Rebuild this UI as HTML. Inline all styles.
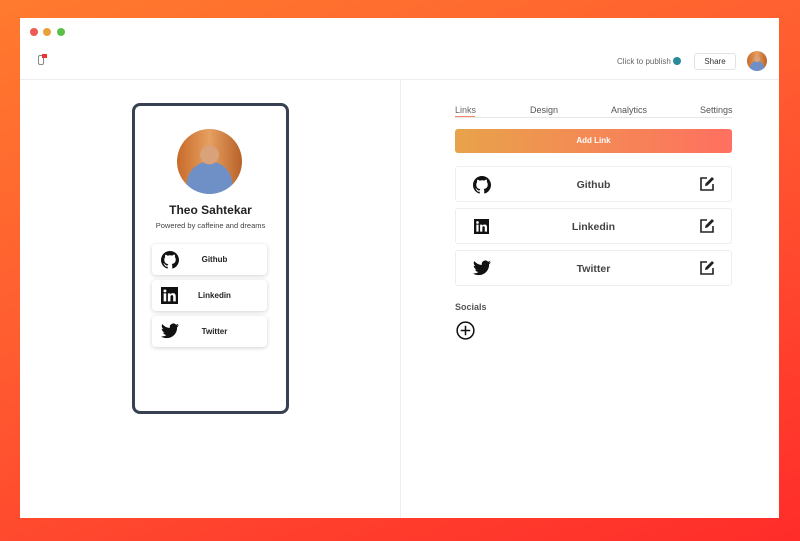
<!DOCTYPE html>
<html><head><meta charset="utf-8"><style>
*{margin:0;padding:0;box-sizing:border-box}
body{width:800px;height:541px;overflow:hidden;background:linear-gradient(160deg,#ff7a2e 0%,#ff5a30 45%,#ff2c2a 100%);font-family:"Liberation Sans",sans-serif;position:relative}
.win{position:absolute;left:20px;top:18px;width:759px;height:500px;background:#fff}
.dot{position:absolute;top:10px;width:8px;height:8px;border-radius:50%}
.hdr{position:absolute;left:0;right:0;top:61px;height:1px;background:#eceef2}
.vdiv{position:absolute;left:380px;top:62px;bottom:0;width:1px;background:#eceef2}
.phone{position:absolute;left:112px;top:85px;width:157px;height:311px;border:3px solid #374151;border-radius:8px;background:#fff}
.av{position:absolute;border-radius:50%;background:radial-gradient(circle at 50% 40%,#d9a27a 0 18%,transparent 19%),radial-gradient(circle at 50% 85%,#6f8fc7 0 35%,transparent 36%),linear-gradient(90deg,#c86a2a,#e6a060 50%,#b8612a)}
.card{position:absolute;left:17px;width:115px;height:31px;background:#fff;border-radius:4px;box-shadow:0 1px 4px rgba(0,0,0,.18);font-size:8px;font-weight:bold;color:#222}
.card span{position:absolute;left:10px;right:0;text-align:center;top:11px}
.card svg{position:absolute;left:9px;top:7px}
.tab{position:absolute;top:87px;font-size:9px;color:#555}
.row{position:absolute;left:435px;width:277px;height:36px;border:1px solid #eceef0;border-radius:3px;font-size:10.5px;font-weight:bold;color:#444}
.row span{position:absolute;left:0;right:0;text-align:center;top:12px}
.row .ic{position:absolute;left:17px;top:9px}
.row .ed{position:absolute;left:243px;top:9px}
</style></head><body>
<div class="win">
<div class="dot" style="left:10px;background:#ee5a52"></div>
<div class="dot" style="left:23px;background:#e8a23c"></div>
<div class="dot" style="left:37px;background:#5bbf4a"></div>
<div style="position:absolute;left:18px;top:37px;width:6px;height:10px;border:1.5px solid #888;border-radius:2px"></div>
<div style="position:absolute;left:22px;top:36px;width:5px;height:4px;background:#e33"></div>
<div style="position:absolute;left:597px;top:39px;font-size:8px;color:#666">Click to publish</div>
<div style="position:absolute;left:653px;top:39px;width:8px;height:8px;border-radius:50%;background:#2a8a9a"></div>
<div style="position:absolute;left:674px;top:35px;width:42px;height:17px;border:1px solid #e3e3e3;border-radius:3px;font-size:8px;color:#333;text-align:center;line-height:15px">Share</div>
<div class="av" style="left:727px;top:33px;width:20px;height:20px"></div>
<div class="hdr"></div><div class="vdiv"></div>

<div class="phone">
<div class="av" style="left:42px;top:23px;width:65px;height:65px"></div>
<div style="position:absolute;left:0;right:0;top:97px;text-align:center;font-size:12px;font-weight:bold;color:#222">Theo Sahtekar</div>
<div style="position:absolute;left:0;right:0;top:115px;text-align:center;font-size:7.5px;color:#444">Powered by caffeine and dreams</div>
<div class="card" style="top:138px"><svg width="18" height="18" viewBox="0 0 16 16"><path fill="#111" d="M8 0C3.58 0 0 3.58 0 8c0 3.54 2.290 6.53 5.47 7.59.4.07.55-.17.55-.38v-1.33c-2.23.48-2.7-1.07-2.7-1.07-.36-.92-.89-1.17-.89-1.17-.73-.5.06-.49.06-.49.8.06 1.23.83 1.23.83.71 1.23 1.87.87 2.33.67.07-.52.28-.87.51-1.07-1.78-.2-3.64-.89-3.64-3.95 0-.87.31-1.59.82-2.15-.08-.2-.36-1.02.08-2.12 0 0 .67-.21 2.2.82A7.6 7.6 0 0 1 8 3.8c.68 0 1.36.09 2 .27 1.53-1.04 2.2-.82 2.2-.82.44 1.1.16 1.92.08 2.12.51.56.82 1.27.82 2.15 0 3.07-1.87 3.75-3.65 3.950.29.25.54.73.54 1.48v2.2c0 .21.15.46.55.38A8 8 0 0 0 16 8c0-4.42-3.58-8-8-8z"/></svg><span>Github</span></div>
<div class="card" style="top:174px"><svg width="17" height="17" viewBox="0 0 16 16"><rect width="16" height="16" fill="#111"/><rect x="2.5" y="6" width="2.4" height="7.5" fill="#fff"/><circle cx="3.7" cy="3.7" r="1.4" fill="#fff"/><path fill="#fff" d="M6.5 6h2.3v1.1c.4-.7 1.2-1.3 2.4-1.3 2.3 0 2.7 1.5 2.7 3.4v4.3h-2.4V9.7c0-.9 0-2-1.2-2s-1.4.9-1.4 1.9v3.9H6.5z"/></svg><span>Linkedin</span></div>
<div class="card" style="top:210px"><svg width="18" height="16" viewBox="0 0 24 20"><path fill="#111" d="M24 2.4a9.8 9.8 0 0 1-2.8.8A4.9 4.9 0 0 0 23.3.4a9.9 9.9 0 0 1-3.1 1.2A4.9 4.9 0 0 0 11.8 6 14 14 0 0 1 1.7.9a4.9 4.9 0 0 0 1.5 6.6A4.9 4.9 0 0 1 1 6.9a4.9 4.9 0 0 0 3.9 4.9 4.9 4.9 0 0 1-2.2.1 4.9 4.9 0 0 0 4.6 3.4A9.9 9.9 0 0 1 0 17.3 14 14 0 0 0 7.5 19.5c9.1 0 14-7.5 14-14v-.6A10 10 0 0 0 24 2.4z"/></svg><span>Twitter</span></div>
</div>

<div class="tab" style="left:435px;color:#666">Links</div>
<div style="position:absolute;left:435px;top:98px;width:20px;height:2px;background:#f08a6a"></div>
<div class="tab" style="left:510px">Design</div>
<div class="tab" style="left:591px">Analytics</div>
<div class="tab" style="left:680px">Settings</div>
<div style="position:absolute;left:435px;top:99px;width:277px;height:1px;background:#e6e6e6"></div>
<div style="position:absolute;left:435px;top:111px;width:277px;height:24px;border-radius:3px;background:linear-gradient(90deg,#e8a34a,#ff7060);color:#fff;font-size:8px;font-weight:bold;text-align:center;line-height:24px">Add Link</div>

<div class="row" style="top:148px"><svg class="ic" width="18" height="18" viewBox="0 0 16 16"><path fill="#111" d="M8 0C3.58 0 0 3.58 0 8c0 3.54 2.29 6.53 5.47 7.59.4.07.55-.17.55-.38v-1.33c-2.23.48-2.7-1.07-2.7-1.07-.36-.92-.89-1.17-.89-1.17-.73-.5.06-.49.06-.49.8.06 1.23.83 1.23.83.71 1.23 1.87.87 2.33.67.07-.52.28-.87.51-1.07-1.78-.2-3.64-.89-3.64-3.95 0-.87.31-1.59.82-2.15-.08-.2-.36-1.02.08-2.12 0 0 .67-.21 2.2.82A7.6 7.6 0 0 1 8 3.8c.68 0 1.36.09 2 .27 1.53-1.04 2.2-.82 2.2-.82.44 1.1.16 1.92.08 2.12.51.56.82 1.27.82 2.15 0 3.07-1.87 3.75-3.65 3.95.29.25.54.73.54 1.48v2.2c0 .21.15.46.55.38A8 8 0 0 0 16 8c0-4.42-3.58-8-8-8z"/></svg><span>Github</span><svg class="ed" width="16" height="16" viewBox="0 0 16 16"><path d="M8 2H2v12h12V8" fill="none" stroke="#222" stroke-width="1.6"/><path d="M6 10l.5-2.5L13 1l2 2-6.5 6.5z" fill="#222"/></svg></div>
<div class="row" style="top:190px"><svg class="ic" style="left:18px;top:10px" width="15" height="15" viewBox="0 0 16 16"><rect width="16" height="16" fill="#111"/><rect x="2.5" y="6" width="2.4" height="7.5" fill="#fff"/><circle cx="3.7" cy="3.7" r="1.4" fill="#fff"/><path fill="#fff" d="M6.5 6h2.3v1.1c.4-.7 1.2-1.3 2.4-1.3 2.3 0 2.7 1.5 2.7 3.4v4.3h-2.4V9.7c0-.9 0-2-1.2-2s-1.4.9-1.4 1.9v3.9H6.5z"/></svg><span>Linkedin</span><svg class="ed" width="16" height="16" viewBox="0 0 16 16"><path d="M8 2H2v12h12V8" fill="none" stroke="#222" stroke-width="1.6"/><path d="M6 10l.5-2.5L13 1l2 2-6.5 6.5z" fill="#222"/></svg></div>
<div class="row" style="top:232px"><svg class="ic" width="18" height="16" viewBox="0 0 24 20"><path fill="#111" d="M24 2.4a9.8 9.8 0 0 1-2.8.8A4.9 4.9 0 0 0 23.3.4a9.9 9.9 0 0 1-3.1 1.2A4.9 4.9 0 0 0 11.8 6 14 14 0 0 1 1.7.9a4.9 4.9 0 0 0 1.5 6.6A4.9 4.9 0 0 1 1 6.9a4.9 4.9 0 0 0 3.9 4.9 4.9 4.9 0 0 1-2.2.1 4.9 4.9 0 0 0 4.6 3.4A9.9 9.9 0 0 1 0 17.3 14 14 0 0 0 7.5 19.5c9.1 0 14-7.5 14-14v-.6A10 10 0 0 0 24 2.4z"/></svg><span>Twitter</span><svg class="ed" width="16" height="16" viewBox="0 0 16 16"><path d="M8 2H2v12h12V8" fill="none" stroke="#222" stroke-width="1.6"/><path d="M6 10l.5-2.5L13 1l2 2-6.5 6.5z" fill="#222"/></svg></div>

<div style="position:absolute;left:435px;top:284px;font-size:9px;font-weight:bold;color:#555">Socials</div>
<svg style="position:absolute;left:436px;top:303px" width="19" height="19" viewBox="0 0 20 20"><circle cx="10" cy="10" r="8.8" fill="none" stroke="#111" stroke-width="1.6"/><path d="M10 5v10M5 10h10" stroke="#111" stroke-width="1.6"/></svg>
</div>
</body></html>
